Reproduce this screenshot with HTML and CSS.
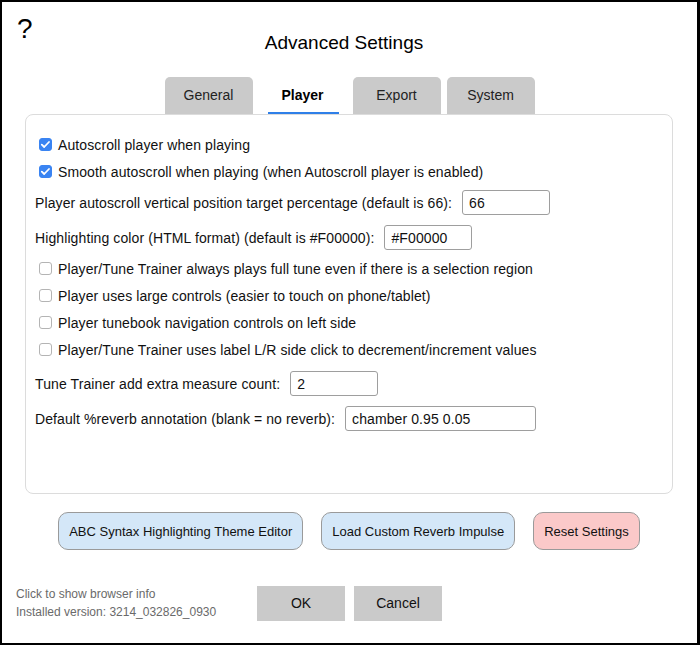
FILE: index.html
```html
<!DOCTYPE html>
<html lang="en">
<head>
<meta charset="utf-8">
<title>Advanced Settings</title>
<link rel="stylesheet" href="styles.css">
</head>
<body>
<div class="dialog">
  <header class="header">
    <span class="help">?</span>
    <h1 class="title">Advanced Settings</h1>
  </header>

  <nav class="tabs">
    <button class="tab">General</button>
    <button class="tab tab-active">Player</button>
    <button class="tab">Export</button>
    <button class="tab">System</button>
  </nav>

  <section class="panel">
    <label class="check-row"><input type="checkbox" class="check" checked>Autoscroll player when playing</label>
    <label class="check-row"><input type="checkbox" class="check" checked>Smooth autoscroll when playing (when Autoscroll player is enabled)</label>
    <label class="field-row"><span>Player autoscroll vertical position target percentage (default is 66):</span><input class="text-input" type="text" value="66"></label>
    <label class="field-row"><span>Highlighting color (HTML format) (default is #F00000):</span><input class="text-input" type="text" value="#F00000"></label>
    <label class="check-row"><input type="checkbox" class="check">Player/Tune Trainer always plays full tune even if there is a selection region</label>
    <label class="check-row"><input type="checkbox" class="check">Player uses large controls (easier to touch on phone/tablet)</label>
    <label class="check-row"><input type="checkbox" class="check">Player tunebook navigation controls on left side</label>
    <label class="check-row"><input type="checkbox" class="check">Player/Tune Trainer uses label L/R side click to decrement/increment values</label>
    <label class="field-row field-row-spaced"><span>Tune Trainer add extra measure count:</span><input class="text-input" type="text" value="2"></label>
    <label class="field-row"><span>Default %reverb annotation (blank = no reverb):</span><input class="text-input text-input-wide" type="text" value="chamber 0.95 0.05"></label>
  </section>

  <div class="actions">
    <button class="pill pill-blue">ABC Syntax Highlighting Theme Editor</button>
    <button class="pill pill-blue">Load Custom Reverb Impulse</button>
    <button class="pill pill-red">Reset Settings</button>
  </div>

  <footer class="footer">
    <div class="info">
      <div>Click to show browser info</div>
      <div>Installed version: 3214_032826_0930</div>
    </div>
    <div class="footer-buttons">
      <button class="plain">OK</button>
      <button class="plain">Cancel</button>
    </div>
    <div></div>
  </footer>
</div>
</body>
</html>
```

FILE: styles.css
```css
* {
  box-sizing: border-box;
}

html, body {
  margin: 0;
  padding: 0;
  background: #fff;
}

body {
  font-family: "Liberation Sans", Arial, Helvetica, sans-serif;
  color: #111;
}

.dialog {
  width: 700px;
  height: 645px;
  border: 2px solid #000;
  border-right-width: 3px;
  display: flex;
  flex-direction: column;
}

/* header: help mark on the left, centred title */
.header {
  display: grid;
  grid-template-columns: 1fr auto 1fr;
  align-items: start;
  padding: 13px 26px 0 15px;
}

.help {
  font-size: 28px;
  line-height: 28px;
  color: #000;
}

.title {
  margin: 18px 0 0;
  font-size: 19px;
  line-height: 19px;
  font-weight: normal;
  color: #000;
}

/* tab strip */
.tabs {
  display: flex;
  justify-content: center;
  gap: 6px;
  margin-top: 25px;
}

.tab {
  position: relative;
  width: 88px;
  height: 37px;
  border: none;
  border-radius: 5px 5px 0 0;
  background: #cacaca;
  font-family: inherit;
  font-size: 14px;
  color: #222;
  padding: 0 0 2px;
}

.tab-active {
  background: #fff;
  font-weight: bold;
  color: #000;
}

.tab-active::after {
  content: "";
  position: absolute;
  left: 9px;
  right: 8px;
  bottom: 0;
  height: 2px;
  background: #2f7fe8;
}

/* settings panel */
.panel {
  margin: 0 24px 0 23px;
  height: 380px;
  border: 1px solid #dcdcdc;
  border-radius: 8px;
  padding: 16px 9px 0;
  display: flex;
  flex-direction: column;
  font-size: 14px;
  letter-spacing: 0.1px;
}

.check-row {
  display: flex;
  align-items: center;
  height: 27px;
  white-space: nowrap;
}

.check {
  appearance: none;
  -webkit-appearance: none;
  width: 13px;
  height: 13px;
  margin: 0 6px 0 4px;
  border: 1px solid #b4b4b4;
  border-radius: 3px;
  background: #fff;
  flex: none;
}

.check:checked {
  border-color: #3a84f2;
  background: #3a84f2 url("data:image/svg+xml,%3Csvg xmlns='http://www.w3.org/2000/svg' viewBox='0 0 13 13'%3E%3Cpath d='M2.8 6.6l2.4 2.4 4.8-5' fill='none' stroke='%23fff' stroke-width='1.8' stroke-linecap='round' stroke-linejoin='round'/%3E%3C/svg%3E") center / 13px 13px no-repeat;
}

.field-row {
  display: flex;
  align-items: center;
  gap: 10px;
  height: 29px;
  margin: 3px 0;
  white-space: nowrap;
}

.field-row-spaced {
  margin-top: 6px;
}

.text-input {
  width: 88px;
  height: 25px;
  border: 1px solid #9e9e9e;
  border-radius: 3px;
  padding: 0 6px;
  font-family: inherit;
  font-size: 14px;
  letter-spacing: 0.1px;
  color: #111;
  background: #fff;
}

.text-input-wide {
  width: 191px;
}

/* secondary actions */
.actions {
  display: flex;
  justify-content: center;
  gap: 18px;
  margin-top: 18px;
  padding-right: 1px;
}

.pill {
  height: 38px;
  padding: 0 10px;
  border: 1px solid #9a9a9a;
  border-radius: 10px;
  font-family: inherit;
  font-size: 13px;
  color: #111;
}

.pill-blue {
  background: #d4e7f8;
}

.pill-red {
  background: #fbc9c9;
}

/* footer: version info and dialog buttons */
.footer {
  display: grid;
  grid-template-columns: 1fr auto 1fr;
  align-items: center;
  margin-top: 35px;
}

.info {
  padding-left: 14px;
  font-size: 12px;
  line-height: 18px;
  color: #6a6a6a;
}

.footer-buttons {
  display: flex;
  gap: 9px;
}

.plain {
  width: 88px;
  height: 35px;
  border: none;
  background: #cacaca;
  font-family: inherit;
  font-size: 14px;
  color: #111;
  padding: 0;
}
```
